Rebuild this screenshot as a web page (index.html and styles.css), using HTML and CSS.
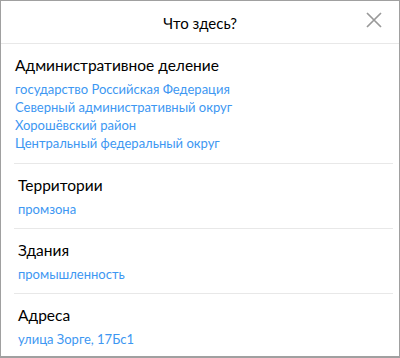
FILE: index.html
```html
<!DOCTYPE html>
<html>
<head>
  <meta name="viewport" content="width=device-width, initial-scale=1.0">
  <title>Что здесь?</title>
  <link rel="stylesheet" href="styles.css">
</head>
<body>
  <div class="panel">
    <div class="header">
      <span class="header-title">Что здесь?</span>
      <button class="close" aria-label="Закрыть">
        <svg width="16" height="16" viewBox="0 0 16 16">
          <path d="M1 1 L15 15 M15 1 L1 15" stroke="#999" stroke-width="1.7" fill="none"/>
        </svg>
      </button>
    </div>
    <div class="section section-first">
      <div class="section-title">Административное деление</div>
      <a class="link" href="#">государство Российская Федерация</a>
      <a class="link" href="#">Северный административный округ</a>
      <a class="link" href="#">Хорошёвский район</a>
      <a class="link" href="#">Центральный федеральный округ</a>
    </div>
    <div class="section">
      <div class="section-title">Территории</div>
      <a class="link" href="#">промзона</a>
    </div>
    <div class="section">
      <div class="section-title">Здания</div>
      <a class="link" href="#">промышленность</a>
    </div>
    <div class="section section-last">
      <div class="section-title">Адреса</div>
      <a class="link" href="#">улица Зорге, 17Бс1</a>
    </div>
  </div>
</body>
</html>
```

FILE: styles.css
```css
body {
  margin: 0;
  padding: 0;
  font-family: Lato, Roboto, "Noto Sans", Arial, sans-serif;
  background: #fff;
}

.panel {
  width: 400px;
  height: 358px;
  box-sizing: border-box;
  border: 1px solid #a0a0a0;
  border-bottom-width: 2px;
  overflow: hidden;
}

.header {
  position: relative;
  height: 42px;
  border-bottom: 1px solid #e8e8e8;
  display: flex;
  align-items: center;
  justify-content: center;
}

.header-title {
  font-size: 15px;
  color: #000;
  margin-top: 2px;
}

.close {
  position: absolute;
  right: 17px;
  top: 11px;
  width: 16px;
  height: 16px;
  padding: 0;
  border: none;
  background: none;
  cursor: pointer;
}

.close svg {
  display: block;
}

.section {
  margin: 0 6px 0 13px;
  padding: 11px 0 10px 4px;
  border-bottom: 1px solid #e8e8e8;
  display: flex;
  flex-direction: column;
}

.section-first {
  padding-left: 1px;
  padding-bottom: 11px;
}

.section-last {
  border-bottom: none;
}

.section-title {
  font-size: 15.5px;
  line-height: 20px;
  color: #000;
  margin-bottom: 5px;
}

.link {
  font-size: 13px;
  line-height: 18px;
  color: #3d97f2;
  text-decoration: none;
}
```
